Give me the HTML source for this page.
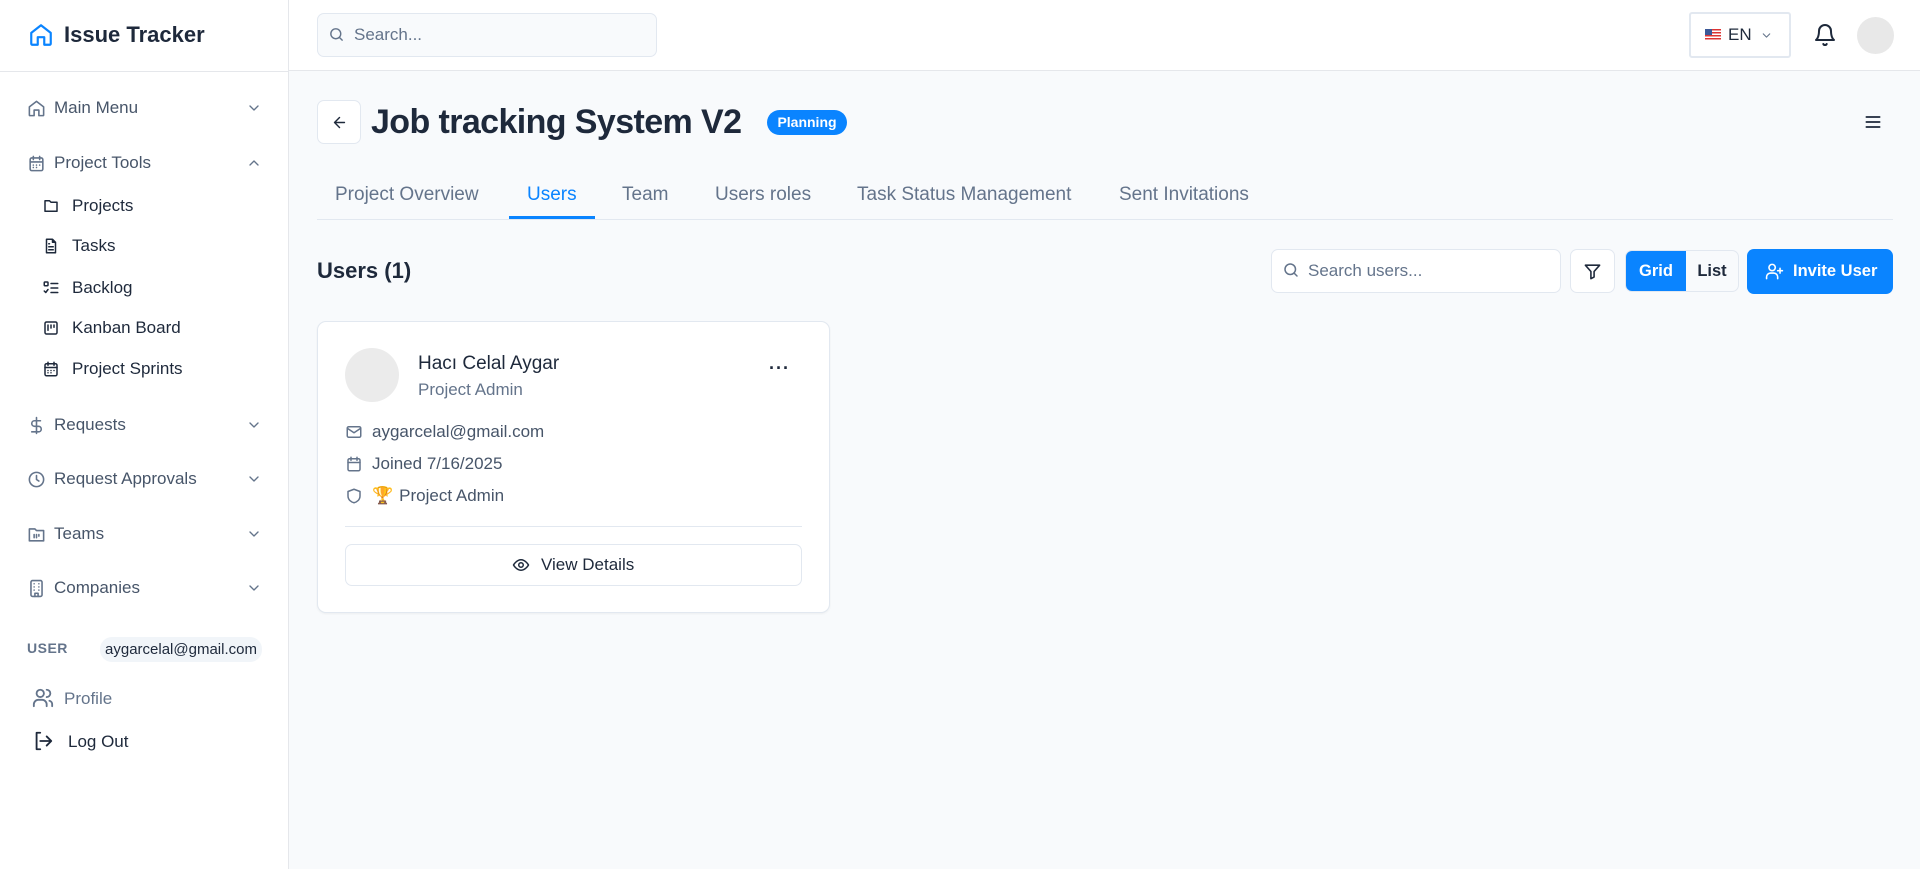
<!DOCTYPE html>
<html><head><meta charset="utf-8"><style>
*{box-sizing:border-box;margin:0;padding:0}
body{width:1920px;height:869px;overflow:hidden;background:#f8fafc;font-family:"Liberation Sans",sans-serif;color:#1e293b;position:relative}
.a{position:absolute}
svg{fill:none;stroke:currentColor;stroke-width:2;stroke-linecap:round;stroke-linejoin:round}
.side{left:0;top:0;width:289px;height:869px;background:#fff;border-right:1px solid #e5e7eb}
.hdr{left:289px;top:0;width:1631px;height:71px;background:#fff;border-bottom:1px solid #e5e7eb}
.si{left:27px;display:flex;align-items:center;gap:0;font-size:17px;color:#475569;width:235px;height:30px;transform:translateY(-50%)}
.si svg{width:19px;height:19px;margin-right:8px;color:#64748b}
.si .ch{position:absolute;right:0;width:16px;height:16px;margin:0}
.sub{left:42px;display:flex;align-items:center;font-size:17px;color:#1e293b;transform:translateY(-50%)}
.sub svg{width:18px;height:18px;margin-right:12px}
.tab{top:184px;font-size:19px;color:#64748b}
.btn{background:#fff;border:1px solid #e2e8f0;border-radius:7px}
.row{left:345px;display:flex;align-items:center;font-size:17px;color:#475569;transform:translateY(-50%)}
.row svg{width:18px;height:18px;margin-right:9px;color:#64748b}
</style></head><body>
<div class="a side"></div>
<div class="a hdr"></div>
<svg class="a" style="left:28px;top:22px;width:26px;height:26px;color:#0a84ff" viewBox="0 0 24 24"><path d="M3 10l9-7 9 7v10a1 1 0 0 1-1 1h-5v-7H9v7H4a1 1 0 0 1-1-1z"/></svg>
<div class="a" style="left:64px;top:22px;font-size:22px;font-weight:bold;color:#1e293b">Issue Tracker</div>
<div class="a" style="left:0;top:71px;width:289px;border-top:1px solid #e5e7eb"></div>
<div class="a" style="left:317px;top:13px;width:340px;height:44px;background:#f8fafc;border:1px solid #e2e8f0;border-radius:7px"></div>
<svg class="a" style="left:328px;top:26px;width:17px;height:17px;color:#64748b" viewBox="0 0 24 24"><circle cx="11" cy="11" r="7"/><path d="M20 20l-4-4"/></svg>
<div class="a" style="left:354px;top:25px;font-size:17px;color:#64748b">Search...</div>
<div class="a" style="left:1689px;top:12px;width:102px;height:46px;border:2px solid #e2e8f0;border-radius:3px;background:#fff"></div>
<div class="a" style="left:1705px;top:29px;width:16px;height:11px;background:repeating-linear-gradient(#d33 0 1.5px,#fff 1.5px 3px)"><div style="width:7px;height:6px;background:#3b5998"></div></div>
<div class="a" style="left:1728px;top:25px;font-size:17px;color:#1e293b">EN</div>
<svg class="a" style="left:1760px;top:29px;width:13px;height:13px;color:#64748b" viewBox="0 0 24 24"><path d="M6 9l6 6 6-6"/></svg>
<svg class="a" style="left:1813px;top:23px;width:24px;height:24px;color:#1e293b" viewBox="0 0 24 24"><path d="M6 8a6 6 0 0 1 12 0c0 7 3 9 3 9H3s3-2 3-9M10.3 21a1.9 1.9 0 0 0 3.4 0"/></svg>
<div class="a" style="left:1857px;top:17px;width:37px;height:37px;border-radius:50%;background:#e8e8e8"></div>
<div class="a si" style="top:108px"><svg viewBox="0 0 24 24"><path d="M3 10l9-7 9 7v10a1 1 0 0 1-1 1h-5v-7H9v7H4a1 1 0 0 1-1-1z"/></svg>Main Menu<svg class="ch" viewBox="0 0 24 24"><path d="M6 9l6 6 6-6"/></svg></div>
<div class="a si" style="top:163px"><svg viewBox="0 0 24 24"><rect x="4" y="5" width="16" height="16" rx="2"/><path d="M8 3v4M16 3v4M4 10h16M8 14h.01M12 14h.01M16 14h.01M8 17h.01M12 17h.01"/></svg>Project Tools<svg class="ch" viewBox="0 0 24 24"><path d="M6 15l6-6 6 6"/></svg></div>
<div class="a sub" style="top:206px"><svg viewBox="0 0 24 24"><path d="M4 5h6l2 2h8v12H4z"/></svg>Projects</div>
<div class="a sub" style="top:246px"><svg viewBox="0 0 24 24"><path d="M14 3H6v18h12V7zM14 3v4h4M9 13h6M9 17h6M9 9h1"/></svg>Tasks</div>
<div class="a sub" style="top:288px"><svg viewBox="0 0 24 24"><rect x="3" y="4" width="5" height="5" rx="1"/><path d="M3 16l2 2 3-4M12 6h9M12 12h9M12 18h9"/></svg>Backlog</div>
<div class="a sub" style="top:328px"><svg viewBox="0 0 24 24"><rect x="4" y="4" width="16" height="16" rx="2"/><path d="M8 8v7M12 8v4M16 8v3"/></svg>Kanban Board</div>
<div class="a sub" style="top:369px"><svg viewBox="0 0 24 24"><rect x="4" y="5" width="16" height="16" rx="2"/><path d="M8 3v4M16 3v4M4 10h16M8 14h.01M12 14h.01M16 14h.01M8 17h.01M12 17h.01"/></svg>Project Sprints</div>
<div class="a si" style="top:425px"><svg viewBox="0 0 24 24"><path d="M12 2v20M17 6H9.5a3.5 3.5 0 0 0 0 7h5a3.5 3.5 0 0 1 0 7H6"/></svg>Requests<svg class="ch" viewBox="0 0 24 24"><path d="M6 9l6 6 6-6"/></svg></div>
<div class="a si" style="top:479px"><svg viewBox="0 0 24 24"><circle cx="12" cy="12" r="9"/><path d="M12 7v5l3 2"/></svg>Request Approvals<svg class="ch" viewBox="0 0 24 24"><path d="M6 9l6 6 6-6"/></svg></div>
<div class="a si" style="top:534px"><svg viewBox="0 0 24 24"><path d="M3 5h7l2 2h9v13H3zM9 12v4M12 12v4M15 12v2"/></svg>Teams<svg class="ch" viewBox="0 0 24 24"><path d="M6 9l6 6 6-6"/></svg></div>
<div class="a si" style="top:588px"><svg viewBox="0 0 24 24"><rect x="5" y="2" width="14" height="20" rx="2"/><path d="M9 6h.01M15 6h.01M9 10h.01M15 10h.01M9 14h.01M15 14h.01M10 22v-4h4v4"/></svg>Companies<svg class="ch" viewBox="0 0 24 24"><path d="M6 9l6 6 6-6"/></svg></div>
<div class="a" style="left:27px;top:640px;font-size:14px;font-weight:bold;color:#64748b;letter-spacing:.5px">USER</div>
<div class="a" style="left:100px;top:637px;width:162px;height:25px;border-radius:12px;background:#f1f5f9;font-size:15px;color:#1e293b;line-height:25px;text-align:center">aygarcelal@gmail.com</div>
<svg class="a" style="left:32px;top:687px;width:22px;height:22px;color:#64748b" viewBox="0 0 24 24"><circle cx="9" cy="7" r="4"/><path d="M2 21v-2a5 5 0 0 1 5-5h4a5 5 0 0 1 5 5v2M16 3a4 4 0 0 1 0 8M22 21v-2a4 4 0 0 0-3-4"/></svg>
<div class="a" style="left:64px;top:689px;font-size:17px;color:#64748b">Profile</div>
<svg class="a" style="left:32px;top:730px;width:22px;height:22px;color:#1e293b" viewBox="0 0 24 24"><path d="M9 21H5V3h4M16 17l5-5-5-5M21 12H9"/></svg>
<div class="a" style="left:68px;top:732px;font-size:17px;color:#1e293b">Log Out</div>
<div class="a btn" style="left:317px;top:100px;width:44px;height:44px"></div>
<svg class="a" style="left:331px;top:114px;width:17px;height:17px;color:#1e293b" viewBox="0 0 24 24"><path d="M19 12H5M12 19l-7-7 7-7"/></svg>
<div class="a" style="left:371px;top:103px;font-size:34px;font-weight:bold;color:#1e293b;letter-spacing:-.6px">Job tracking System V2</div>
<div class="a" style="left:767px;top:110px;width:80px;height:25px;border-radius:13px;background:#0a84ff;color:#fff;font-size:14px;font-weight:bold;line-height:25px;text-align:center">Planning</div>
<svg class="a" style="left:1863px;top:112px;width:20px;height:20px;color:#1e293b" viewBox="0 0 24 24"><path d="M4 6h16M4 12h16M4 18h16"/></svg>
<div class="a tab" style="left:335px">Project Overview</div>
<div class="a tab" style="left:527px;color:#0a84ff">Users</div>
<div class="a tab" style="left:622px">Team</div>
<div class="a tab" style="left:715px">Users roles</div>
<div class="a tab" style="left:857px">Task Status Management</div>
<div class="a tab" style="left:1119px">Sent Invitations</div>
<div class="a" style="left:317px;top:219px;width:1576px;border-top:1px solid #e2e8f0"></div>
<div class="a" style="left:509px;top:216px;width:86px;height:3px;background:#0a84ff"></div>
<div class="a" style="left:317px;top:258px;font-size:22px;font-weight:bold;color:#1e293b">Users (1)</div>
<div class="a btn" style="left:1271px;top:249px;width:290px;height:44px"></div>
<svg class="a" style="left:1282px;top:261px;width:18px;height:18px;color:#64748b" viewBox="0 0 24 24"><circle cx="11" cy="11" r="7"/><path d="M20 20l-4-4"/></svg>
<div class="a" style="left:1308px;top:261px;font-size:17px;color:#64748b">Search users...</div>
<div class="a btn" style="left:1570px;top:249px;width:45px;height:44px"></div>
<svg class="a" style="left:1583px;top:262px;width:19px;height:19px;color:#1e293b" viewBox="0 0 24 24"><path d="M3 4h18l-7 8v7l-4 2v-9z"/></svg>
<div class="a" style="left:1625px;top:250px;width:114px;height:42px;border:1px solid #e2e8f0;border-radius:7px;background:#f8fafc;overflow:hidden">
<div style="width:60px;height:42px;background:#0a84ff;color:#fff;font-size:16.5px;font-weight:bold;line-height:40px;text-align:center;float:left">Grid</div>
<div style="float:left;width:52px;font-size:16.5px;font-weight:bold;line-height:40px;text-align:center;color:#1e293b">List</div></div>
<div class="a" style="left:1747px;top:249px;width:146px;height:45px;border-radius:7px;background:#0a84ff;color:#fff;font-size:16.5px;font-weight:bold;line-height:45px;padding-left:46px">Invite User</div>
<svg class="a" style="left:1765px;top:262px;width:19px;height:19px;color:#fff" viewBox="0 0 24 24"><circle cx="9" cy="7" r="4"/><path d="M2 21v-2a5 5 0 0 1 5-5h4a5 5 0 0 1 5 5v2M19 8v6M16 11h6"/></svg>
<div class="a" style="left:317px;top:321px;width:513px;height:292px;background:#fff;border:1px solid #e2e8f0;border-radius:9px;box-shadow:0 1px 2px rgba(0,0,0,.05)"></div>
<div class="a" style="left:345px;top:348px;width:54px;height:54px;border-radius:50%;background:#ebebeb"></div>
<div class="a" style="left:418px;top:353px;font-size:19px;color:#1e293b">Hacı Celal Aygar</div>
<div class="a" style="left:418px;top:380px;font-size:17px;color:#64748b">Project Admin</div>
<div class="a" style="left:769px;top:358px;font-size:18px;font-weight:bold;color:#1e293b;letter-spacing:1px">···</div>
<div class="a row" style="top:432px"><svg viewBox="0 0 24 24"><rect x="3" y="5" width="18" height="14" rx="2"/><path d="M3 7l9 6 9-6"/></svg>aygarcelal@gmail.com</div>
<div class="a row" style="top:464px"><svg viewBox="0 0 24 24"><rect x="4" y="5" width="16" height="16" rx="2"/><path d="M8 3v4M16 3v4M4 10h16"/></svg>Joined 7/16/2025</div>
<div class="a row" style="top:496px"><svg viewBox="0 0 24 24"><path d="M12 3l8 3v6c0 5-4 8-8 9-4-1-8-4-8-9V6z"/></svg><span style="font-family:'DejaVu Sans',sans-serif;color:#d4a017;margin-right:6px">🏆</span>Project Admin</div>
<div class="a" style="left:345px;top:526px;width:457px;border-top:1px solid #e2e8f0"></div>
<div class="a btn" style="left:345px;top:544px;width:457px;height:42px"></div>
<svg class="a" style="left:512px;top:556px;width:18px;height:18px;color:#1e293b" viewBox="0 0 24 24"><path d="M2 12s4-7 10-7 10 7 10 7-4 7-10 7S2 12 2 12z"/><circle cx="12" cy="12" r="3"/></svg>
<div class="a" style="left:541px;top:555px;font-size:17px;color:#1e293b">View Details</div>
</body></html>
